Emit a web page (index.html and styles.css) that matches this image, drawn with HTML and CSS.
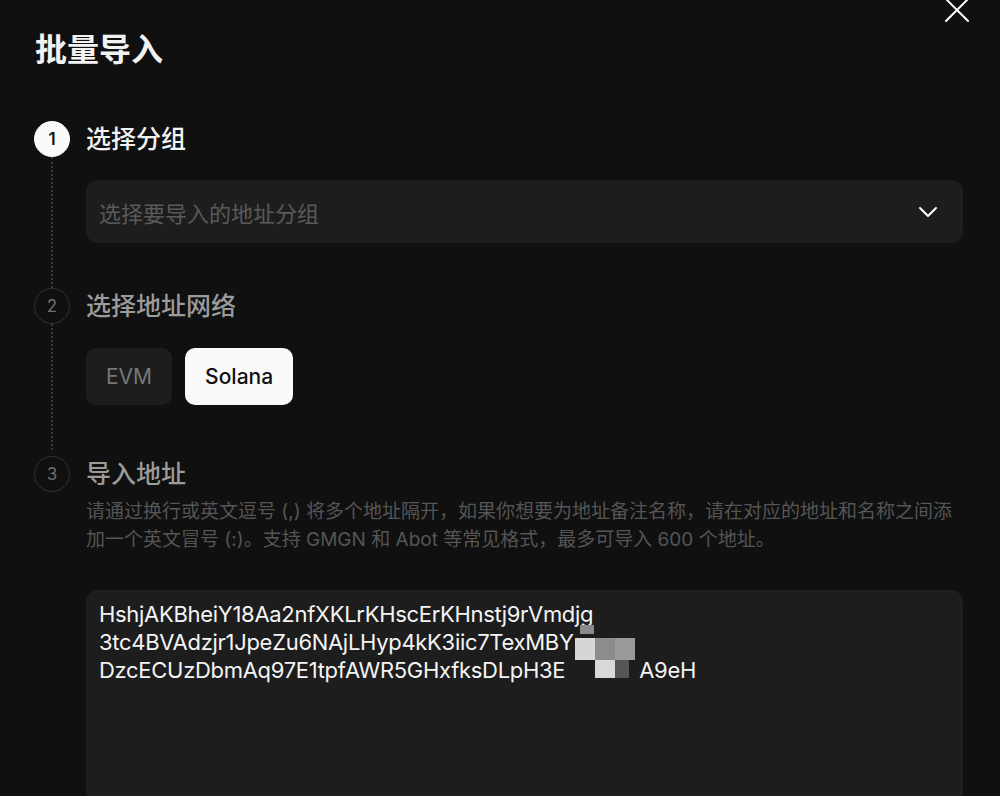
FILE: index.html
```html
<!DOCTYPE html>
<html lang="zh-CN">
  <head>
    <meta charset='utf-8'>
    <meta name='viewport' content='width=device-width, initial-scale=1'>
    <title>批量导入</title>
<link rel="stylesheet" href="styles.css">
</head>
<body>

<div class="modal">
  <button class="close" type="button" aria-label="关闭">
    <svg width="26" height="26" viewBox="0 0 26 26" fill="none" stroke="#ffffff" stroke-width="2" stroke-linecap="round">
      <path d="M2 2 L24 24 M24 2 L2 24"/>
    </svg>
  </button>

  <h1 class="title">批量导入</h1>

  <div class="step">
    <div class="rail">
      <div class="num active">1</div>
      <div class="line"></div>
    </div>
    <div class="content">
      <div class="step-title active">选择分组</div>
      <div class="select">
        <span class="placeholder">选择要导入的地址分组</span>
        <svg width="20" height="12" viewBox="0 0 20 12" fill="none" stroke="#ffffff" stroke-width="2" stroke-linecap="round" stroke-linejoin="round">
          <path d="M2 2 L10 10 L18 2"/>
        </svg>
      </div>
    </div>
  </div>

  <div class="step">
    <div class="rail">
      <div class="num">2</div>
      <div class="line"></div>
    </div>
    <div class="content">
      <div class="step-title">选择地址网络</div>
      <div class="chains">
        <button class="chain" type="button">EVM</button>
        <button class="chain selected" type="button">Solana</button>
      </div>
    </div>
  </div>

  <div class="step last">
    <div class="rail">
      <div class="num">3</div>
    </div>
    <div class="content">
      <div class="step-title">导入地址</div>
      <p class="hint">请通过换行或英文逗号 (,) 将多个地址隔开，如果你想要为地址备注名称，请在对应的地址和名称之间添加一个英文冒号 (:)。支持 GMGN 和 Abot 等常见格式，最多可导入 600 个地址。</p>
      <div class="addresses">
        <div>HshjAKBheiY18Aa2nfXKLrKHscErKHnstj9rVmdjg</div>
        <div>3tc4BVAdzjr1JpeZu6NAjLHyp4kK3iic7TexMBY</div>
        <div>DzcECUzDbmAq97E1tpfAWR5GHxfksDLpH3E<span class="gap"></span>A9eH</div>
        <!-- pixelated bits of the masked addresses -->
        <span class="px" style="left:494px;top:35px;width:14px;height:9px;background:#8a8a8a"></span>
        <span class="px" style="left:489px;top:48px;width:20px;height:22px;background:#d6d6d6"></span>
        <span class="px" style="left:509px;top:48px;width:20px;height:22px;background:#8c8c8c"></span>
        <span class="px" style="left:529px;top:48px;width:20px;height:22px;background:#9a9a9a"></span>
        <span class="px" style="left:509px;top:70px;width:20px;height:18px;background:#d9d9d9"></span>
        <span class="px" style="left:529px;top:70px;width:14px;height:18px;background:#555555"></span>
      </div>
    </div>
  </div>
</div>

</body></html>
```

FILE: styles.css
```css
body {
    margin: 0;
    background-color: #101010;
    color: #f2f2f2;
    font-family: "Inter", "Noto Sans CJK SC", sans-serif;
    overflow: hidden;
}

.modal {
    position: relative;
    padding: 30px 37px 0 34px;
}

.close {
    position: absolute;
    top: -3px;
    right: 30px;
    padding: 0;
    border: none;
    background: none;
    cursor: pointer;
}

.title {
    margin: 0 0 51px 1px;
    font-size: 32px;
    line-height: 40px;
    font-weight: 700;
}

/* Steps */
.step {
    display: flex;
    gap: 16px;
    padding-bottom: 45px;
}

.step:nth-child(4) {
    padding-bottom: 51px;
}

.rail {
    width: 36px;
    display: flex;
    flex-direction: column;
    align-items: center;
}

.num {
    width: 34px;
    height: 34px;
    border: 1px solid #333333;
    border-radius: 50%;
    display: flex;
    align-items: center;
    justify-content: center;
    font-size: 17px;
    color: #6e6e6e;
}

.num.active {
    background-color: #fafafa;
    border-color: #fafafa;
    color: #111111;
    font-weight: 600;
}

.line {
    flex: 1;
    border-left: 2px dotted #3a3a3a;
    margin-bottom: -45px;
}

.content {
    flex: 1;
}

.step-title {
    font-size: 25px;
    line-height: 36px;
    font-weight: 500;
    color: #9b9b9b;
}

.step-title.active {
    color: #f2f2f2;
}

/* Group select */
.select {
    margin-top: 23px;
    height: 63px;
    border-radius: 12px;
    background-color: #1d1d1d;
    display: flex;
    align-items: center;
    justify-content: space-between;
    padding: 0 25px 0 13px;
}

.placeholder {
    font-size: 22px;
    color: #5a5a5a;
}

/* Network buttons */
.chains {
    margin-top: 24px;
    display: flex;
    gap: 13px;
}

.chain {
    height: 57px;
    padding: 0 20px;
    border: none;
    border-radius: 10px;
    background-color: #1d1d1d;
    color: #777777;
    font-family: inherit;
    font-size: 21px;
}

.chain.selected {
    background-color: #fafafa;
    color: #111111;
    font-weight: 500;
}

/* Addresses */
.hint {
    margin: 6px 0 0;
    font-size: 19px;
    line-height: 28px;
    color: #555555;
}

.addresses {
    position: relative;
    margin-top: 36px;
    height: 260px;
    border-radius: 12px;
    background-color: #1d1d1d;
    padding: 10px 13px;
    font-size: 22px;
    line-height: 28px;
    color: #f4f4f4;
    letter-spacing: -0.3px;
}

.gap {
    display: inline-block;
    width: 74px;
}

.px {
    position: absolute;
}
```
